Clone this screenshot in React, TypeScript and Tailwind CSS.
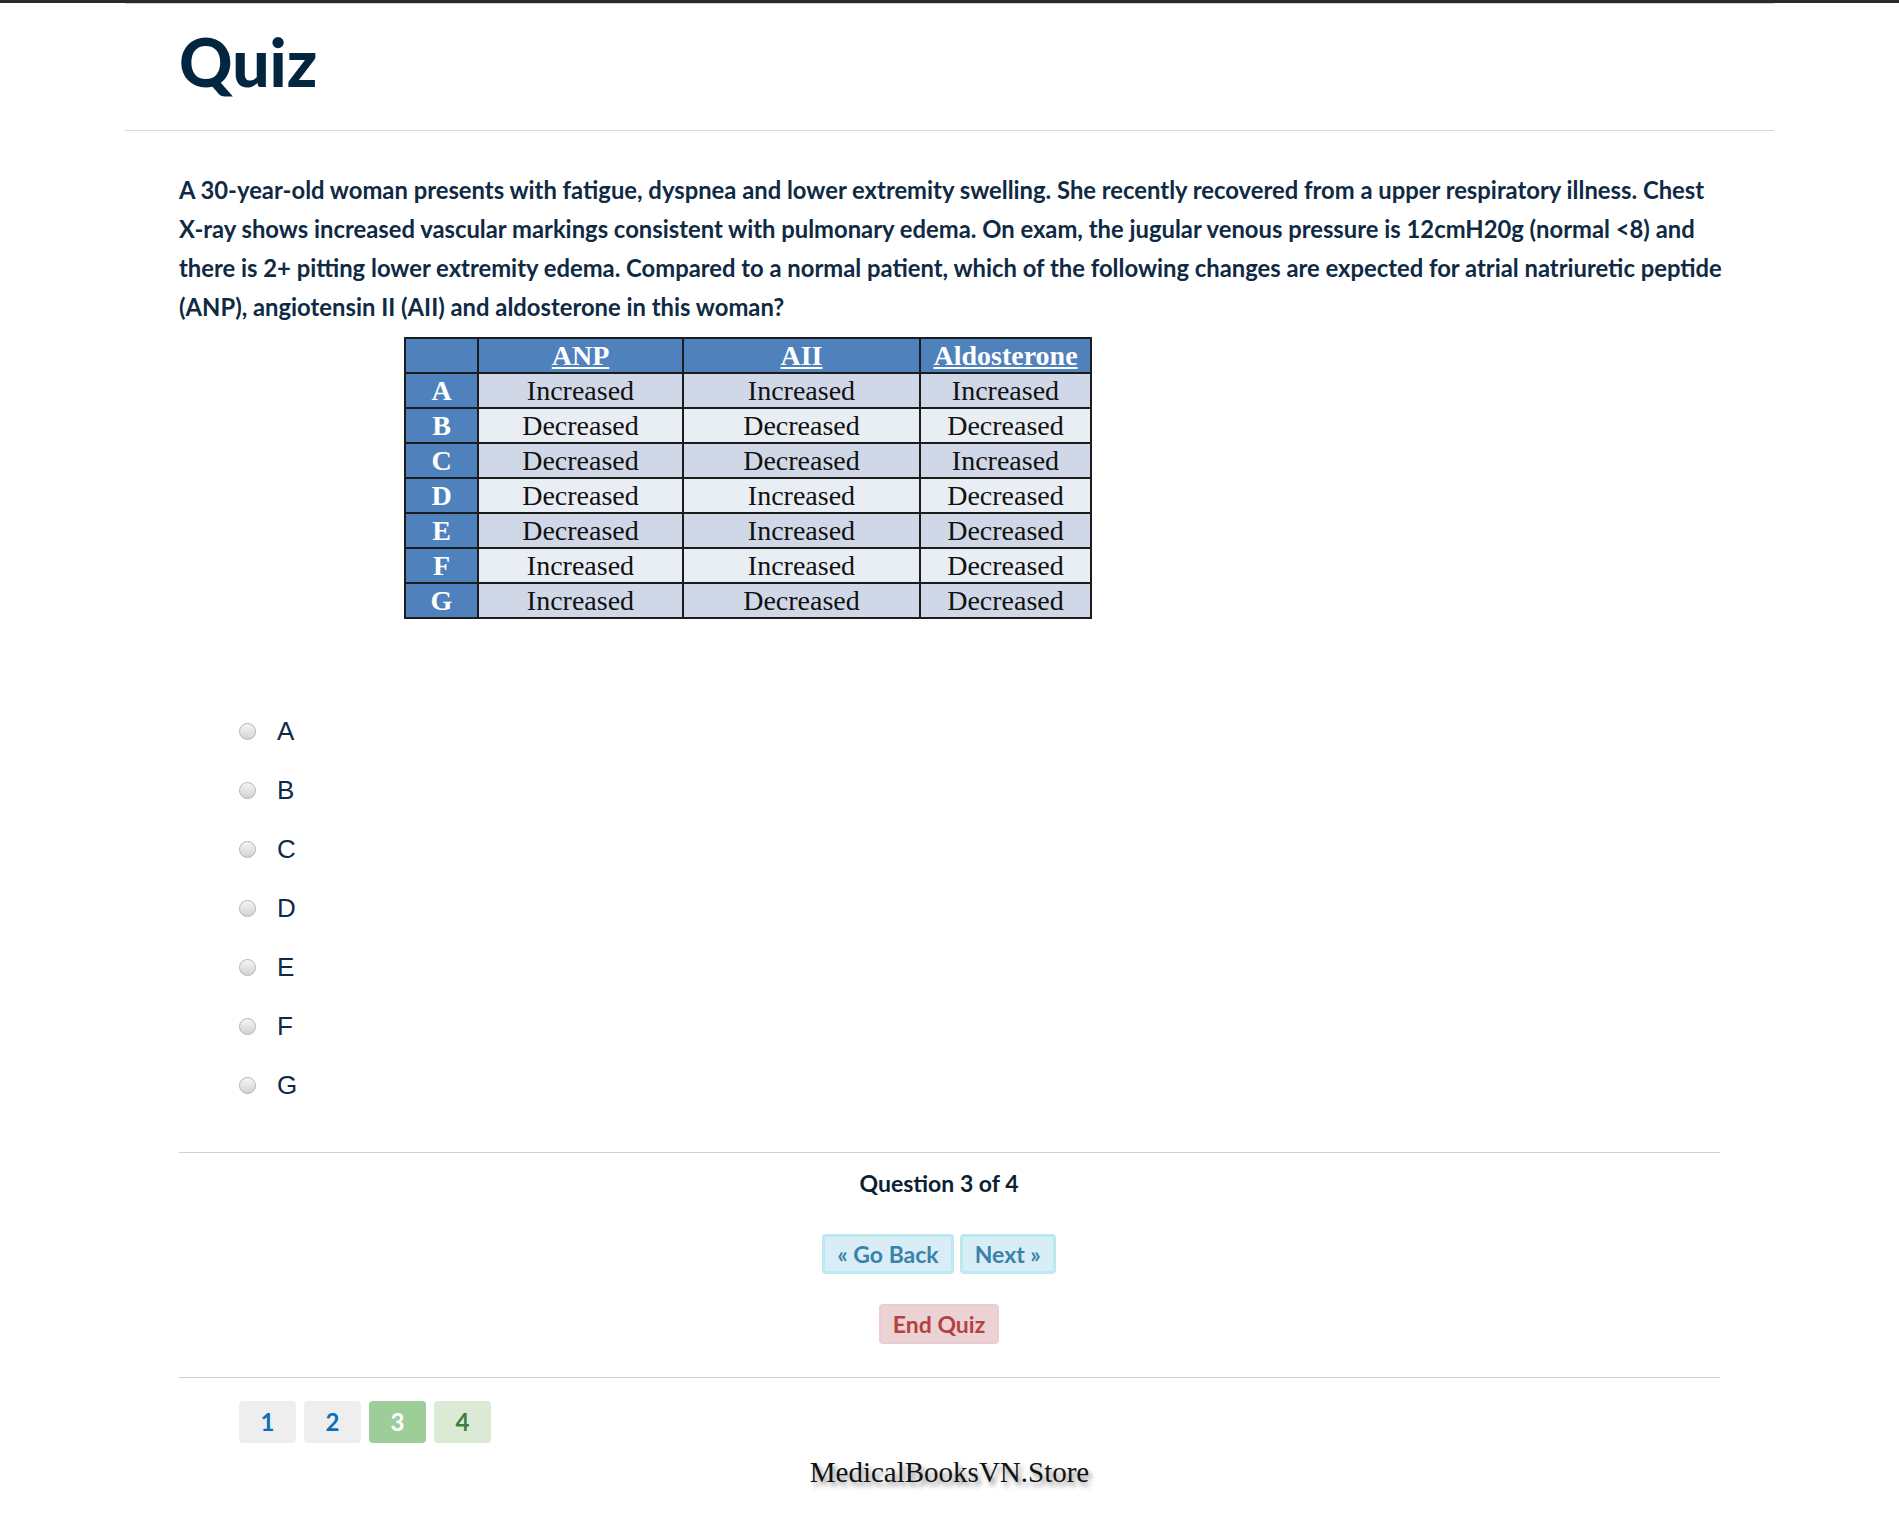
const rows = [
  { key: "A", anp: "Increased", aii: "Increased", ald: "Increased" },
  { key: "B", anp: "Decreased", aii: "Decreased", ald: "Decreased" },
  { key: "C", anp: "Decreased", aii: "Decreased", ald: "Increased" },
  { key: "D", anp: "Decreased", aii: "Increased", ald: "Decreased" },
  { key: "E", anp: "Decreased", aii: "Increased", ald: "Decreased" },
  { key: "F", anp: "Increased", aii: "Increased", ald: "Decreased" },
  { key: "G", anp: "Increased", aii: "Decreased", ald: "Decreased" },
]

const options = ["A", "B", "C", "D", "E", "F", "G"]

function AnswerTable() {
  const cell = "border-2 border-[#1c1c1c] text-center h-[35px] p-0 leading-none"
  return (
    <table className="ml-[225px] mt-[10px] border-collapse font-['Liberation_Serif',serif] text-[28px] text-[#111]">
      <thead>
        <tr className="bg-[#4f81bd] text-white font-bold">
          <th className={`${cell} w-[73px]`}></th>
          <th className={`${cell} w-[205px]`}>
            <span className="underline">ANP</span>
          </th>
          <th className={`${cell} w-[237px]`}>
            <span className="underline">AII</span>
          </th>
          <th className={`${cell} w-[171px]`}>
            <span className="underline">Aldosterone</span>
          </th>
        </tr>
      </thead>
      <tbody>
        {rows.map((r, i) => (
          <tr key={r.key} className={i % 2 === 0 ? "bg-[#d0d8e8]" : "bg-[#e9edf4]"}>
            <td className={`${cell} bg-[#4f81bd] text-white font-bold`}>{r.key}</td>
            <td className={cell}>{r.anp}</td>
            <td className={cell}>{r.aii}</td>
            <td className={cell}>{r.ald}</td>
          </tr>
        ))}
      </tbody>
    </table>
  )
}

export default function App() {
  return (
    <div className="min-h-screen bg-white font-['Lato',sans-serif] text-[#0f2a44]">
      <div className="h-[3px] bg-[#2a2a2a]" />
      <div className="mx-[125px] border-t border-[#d2d2d2]">
        {/* titulo */}
        <header className="border-b border-[#d6d6d6] px-[54px] pt-[25px] pb-[35px]">
          <h1 className="text-[66px] leading-none font-black text-[#032640]">Quiz</h1>
        </header>

        <main className="px-[54px]">
          <p className="mt-[40px] -mr-[25px] text-[23.8px] leading-[39px] font-bold">
            A 30-year-old woman presents with fatigue, dyspnea and lower extremity swelling. She recently recovered from a
            upper respiratory illness. Chest <span className="whitespace-nowrap">X-ray</span> shows increased vascular
            markings consistent with pulmonary edema. On exam, the jugular venous pressure is 12cmH20g (normal &lt;8) and
            there is 2+ pitting lower extremity edema. Compared to a normal patient, which of the following changes are
            expected for atrial natriuretic peptide (ANP), angiotensin II (AII) and aldosterone in this woman?
          </p>

          <AnswerTable />

          {/* alternativas */}
          <ul className="mt-[83px] pl-[60px]">
            {options.map((opt) => (
              <li key={opt} className="flex h-[59px] items-center">
                <span className="h-[17px] w-[17px] rounded-full border border-[#b3b3b3] bg-linear-to-b from-[#f5f5f5] to-[#d3d3d3]" />
                <span className="ml-[21px] font-['Liberation_Sans',sans-serif] text-[26px] text-[#0e2a47]">{opt}</span>
              </li>
            ))}
          </ul>

          <div className="mt-[37px] border-t border-[#d0d0d0] pr-[21px] flex flex-col items-center">
            <div className="mt-[15px] text-[23px] leading-[30px] font-bold text-[#0c1f33]">Question 3 of 4</div>
            <div className="mt-[36px] flex gap-[6px]">
              <button className="h-[40px] rounded-[4px] border-[3px] border-[#bce8f1] bg-[#d9edf7] px-[12px] text-[23px] font-bold text-[#3a82ab]">
                « Go Back
              </button>
              <button className="h-[40px] rounded-[4px] border-[3px] border-[#bce8f1] bg-[#d9edf7] px-[12px] text-[23px] font-bold text-[#3a82ab]">
                Next »
              </button>
            </div>
            <button className="mt-[30px] h-[40px] rounded-[4px] border-2 border-[#ebccd1] bg-[#ead2d5] px-[12px] text-[23px] font-bold text-[#b5413f]">
              End Quiz
            </button>
          </div>

          <div className="mt-[33px] border-t border-[#d0d0d0] pt-[23px] pl-[60px] flex gap-[8px]">
            <div className="flex h-[42px] w-[57px] items-center justify-center rounded-[4px] bg-[#eeeeee] text-[24px] font-bold text-[#0b6fbd]">1</div>
            <div className="flex h-[42px] w-[57px] items-center justify-center rounded-[4px] bg-[#eeeeee] text-[24px] font-bold text-[#0b6fbd]">2</div>
            <div className="flex h-[42px] w-[57px] items-center justify-center rounded-[4px] bg-[#9dce9a] text-[24px] font-bold text-white">3</div>
            <div className="flex h-[42px] w-[57px] items-center justify-center rounded-[4px] bg-[#dbead4] text-[24px] font-bold text-[#3f7f3c]">4</div>
          </div>
        </main>
      </div>

      <div className="mt-[11px] pb-[40px] text-center font-['Liberation_Serif',serif] text-[29px] leading-[36px] text-[#111] [text-shadow:3px_4px_5px_rgba(0,0,0,0.45)]">
        MedicalBooksVN.Store
      </div>
    </div>
  )
}
